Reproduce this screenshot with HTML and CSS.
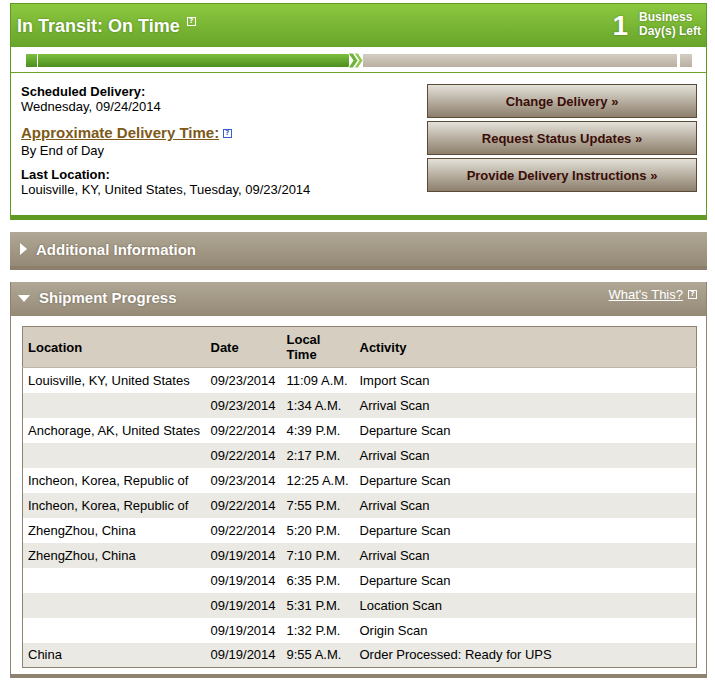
FILE: index.html
```html
<!DOCTYPE html>
<html>
<head>
<meta charset="utf-8">
<link rel="stylesheet" href="styles.css">
</head>
<body>
<div class="page">
  <section class="status">
    <div class="status-head">
      <h1 class="status-title">In Transit: On Time <span class="help help-light">?</span></h1>
      <div class="days">
        <span class="days-num">1</span>
        <span class="days-label">Business<br>Day(s) Left</span>
      </div>
    </div>
    <div class="track">
      <div class="bar">
        <span class="seg seg-green seg-start"></span>
        <span class="seg seg-green seg-long"></span>
        <svg class="chev" width="18" height="17" viewBox="0 0 18 17">
          <path d="M1 1 L6 1 L11 8.5 L6 16 L1 16 L6 8.5 Z" fill="#6fb33a" stroke="#fff" stroke-width="1"/>
          <path d="M7 1 L11 1 L16 8.5 L11 16 L7 16 L12 8.5 Z" fill="#8cc94a" stroke="#fff" stroke-width="1"/>
        </svg>
        <span class="seg seg-gray seg-rest"></span>
        <span class="seg seg-gray seg-end"></span>
      </div>
    </div>
    <div class="details">
      <div class="info">
        <div class="label">Scheduled Delivery:</div>
        <div class="value">Wednesday, 09/24/2014</div>
        <div class="approx"><a class="approx-link">Approximate Delivery Time:</a> <span class="help help-blue">?</span></div>
        <div class="value">By End of Day</div>
        <div class="label label-gap">Last Location:</div>
        <div class="value">Louisville, KY, United States, Tuesday, 09/23/2014</div>
      </div>
      <div class="actions">
        <button class="btn">Change Delivery »</button>
        <button class="btn">Request Status Updates »</button>
        <button class="btn">Provide Delivery Instructions »</button>
      </div>
    </div>
  </section>

  <section class="fold fold-closed">
    <div class="fold-head">
      <span class="tri tri-right"></span>
      <span class="fold-title">Additional Information</span>
    </div>
  </section>

  <section class="fold fold-open">
    <div class="fold-head">
      <span class="tri tri-down"></span>
      <span class="fold-title">Shipment Progress</span>
      <span class="whats"><a class="whats-link">What's This?</a> <span class="help help-light">?</span></span>
    </div>
    <div class="fold-body">
      <table class="progress">
        <colgroup>
          <col class="c-loc"><col class="c-date"><col class="c-time"><col>
        </colgroup>
        <thead>
          <tr><th>Location</th><th>Date</th><th>Local<br>Time</th><th>Activity</th></tr>
        </thead>
        <tbody>
          <tr><td>Louisville, KY, United States</td><td>09/23/2014</td><td>11:09 A.M.</td><td>Import Scan</td></tr>
          <tr><td></td><td>09/23/2014</td><td>1:34 A.M.</td><td>Arrival Scan</td></tr>
          <tr><td>Anchorage, AK, United States</td><td>09/22/2014</td><td>4:39 P.M.</td><td>Departure Scan</td></tr>
          <tr><td></td><td>09/22/2014</td><td>2:17 P.M.</td><td>Arrival Scan</td></tr>
          <tr><td>Incheon, Korea, Republic of</td><td>09/23/2014</td><td>12:25 A.M.</td><td>Departure Scan</td></tr>
          <tr><td>Incheon, Korea, Republic of</td><td>09/22/2014</td><td>7:55 P.M.</td><td>Arrival Scan</td></tr>
          <tr><td>ZhengZhou, China</td><td>09/22/2014</td><td>5:20 P.M.</td><td>Departure Scan</td></tr>
          <tr><td>ZhengZhou, China</td><td>09/19/2014</td><td>7:10 P.M.</td><td>Arrival Scan</td></tr>
          <tr><td></td><td>09/19/2014</td><td>6:35 P.M.</td><td>Departure Scan</td></tr>
          <tr><td></td><td>09/19/2014</td><td>5:31 P.M.</td><td>Location Scan</td></tr>
          <tr><td></td><td>09/19/2014</td><td>1:32 P.M.</td><td>Origin Scan</td></tr>
          <tr><td>China</td><td>09/19/2014</td><td>9:55 A.M.</td><td>Order Processed: Ready for UPS</td></tr>
        </tbody>
      </table>
    </div>
  </section>
</div>
</body>
</html>
```

FILE: styles.css
```css
* { box-sizing: border-box; }
body {
  margin: 0;
  font-family: "Liberation Sans", Arial, sans-serif;
  font-size: 13px;
  color: #000;
  background: #fff;
}
.page {
  width: 715px;
  padding: 3px 8px 0 10px;
}

/* status panel */
.status {
  border: 1px solid #5f9a22;
  border-bottom: 5px solid #5f9a22;
}
.status-head {
  height: 43px;
  background: linear-gradient(#8cc83f, #67a42a);
  display: flex;
  align-items: center;
  justify-content: space-between;
  padding: 0 5px 0 6px;
}
.status-title {
  margin: 0;
  font-size: 18px;
  font-weight: bold;
  color: #fff;
  text-shadow: 0 0 2px rgba(40, 80, 10, 0.6);
  display: flex;
  align-items: center;
  gap: 7px;
  position: relative;
  top: 1px;
}
.status-title .help { margin-top: -10px; }
.days {
  display: flex;
  align-items: center;
  color: #fff;
  font-weight: bold;
  text-shadow: 0 0 2px rgba(40, 80, 10, 0.6);
}
.days-num {
  font-size: 28px;
  margin-right: 11px;
}
.days-label {
  font-size: 12px;
  line-height: 14px;
  margin-top: -3px;
}

.help {
  display: inline-block;
  width: 9px;
  height: 9px;
  border: 1px solid #fff;
  font-size: 7px;
  line-height: 7px;
  text-align: center;
  font-weight: bold;
  color: #fff;
  text-shadow: none;
  font-family: "DejaVu Sans", sans-serif;
}
.help-blue {
  border-color: #3a5fcd;
  color: #3a5fcd;
  vertical-align: 3px;
}

/* progress track */
.track {
  height: 26px;
  padding: 7px 12px 0 15px;
  border-bottom: 1px solid #6aa52a;
}
.bar {
  display: flex;
  align-items: center;
  height: 13px;
}
.seg { display: block; height: 13px; }
.seg-green { background: linear-gradient(#7cbf3f, #4d8e1e); }
.seg-gray { background: linear-gradient(#d4cdc2, #bab0a2); }
.seg-start { width: 11px; margin-right: 1px; }
.seg-long { width: 311px; }
.chev { display: block; margin: 0 -2px; position: relative; z-index: 1; }
.seg-rest { width: 314px; }
.seg-end { width: 12px; margin-left: 3px; }

/* details */
.details {
  display: flex;
  justify-content: space-between;
  padding: 11px 9px 18px 10px;
}
.info { line-height: 15px; }
.label { font-weight: bold; }
.label-gap { margin-top: 9px; }
.approx {
  margin-top: 10px;
  line-height: 18px;
}
.approx-link {
  font-size: 15px;
  font-weight: bold;
  color: #7d5a17;
  text-decoration: underline;
}
.actions {
  width: 270px;
  display: flex;
  flex-direction: column;
  gap: 3px;
}
.btn {
  height: 34px;
  border: 1px solid #5b4a38;
  background: linear-gradient(#e4e1d9, #b3aa9b 55%, #8c7f6c);
  font-family: "Liberation Sans", Arial, sans-serif;
  font-size: 13px;
  font-weight: bold;
  color: #3a0d08;
  padding: 0;
}

/* fold panels */
.fold {
  border: 1px solid #8e8371;
  border-top: 0;
  margin-top: 12px;
}
.fold-closed { border: 0; }
.fold-closed .fold-head {
  height: 38px;
  border-bottom: 4px solid #8c806d;
}
.fold-head {
  display: flex;
  align-items: center;
  height: 34px;
  padding: 0 9px 0 9px;
  background: linear-gradient(#b0a796, #958a76);
  color: #fff;
  font-weight: bold;
  position: relative;
}
.fold-title {
  font-size: 15px;
  text-shadow: 0 0 2px rgba(70, 55, 35, 0.6);
}
.tri {
  display: block;
  width: 0;
  height: 0;
  margin-right: 9px;
}
.tri-right {
  border-top: 6px solid transparent;
  border-bottom: 6px solid transparent;
  border-left: 7px solid #fff;
  margin-left: 1px;
}
.tri-down {
  border-left: 6px solid transparent;
  border-right: 6px solid transparent;
  border-top: 7px solid #fff;
  margin-left: -2px;
  margin-top: 1px;
}
.fold-open .fold-head { padding-bottom: 3px; }
.whats {
  position: absolute;
  right: 9px;
  top: 5px;
  font-size: 13px;
  font-weight: normal;
  display: flex;
  align-items: center;
  gap: 5px;
}
.whats-link {
  color: #fff;
  text-decoration: underline;
}
.fold-open {
  border-bottom: 4px solid #8e8371;
}
.fold-body {
  padding: 10px 9px 6px 11px;
}

/* table */
.progress {
  width: 100%;
  border-collapse: collapse;
  border: 1px solid #8e8371;
}
.c-loc { width: 183px; }
.c-date { width: 76px; }
.c-time { width: 73px; }
.progress th {
  background: #d5cec1;
  text-align: left;
  font-weight: bold;
  height: 41px;
  line-height: 15px;
  padding: 0 5px;
  border-bottom: 1px solid #bfb6a7;
}
.progress td {
  height: 25px;
  padding: 0 5px;
  white-space: nowrap;
}
.progress tbody tr:nth-child(even) td { background: #eae9e3; }
```
